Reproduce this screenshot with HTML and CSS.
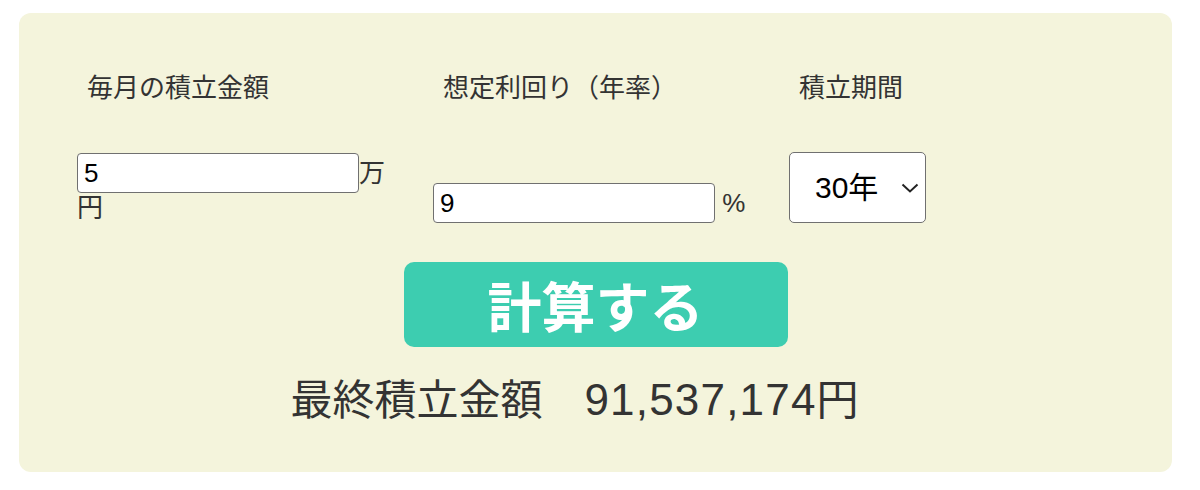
FILE: index.html
```html
<!DOCTYPE html>
<html lang="ja">
    <head>
        <meta charset="UTF-8" />
        <meta name="viewport" content="width=device-width, initial-scale=1.0" />
        <title>積立シミュレーション</title>
        <link rel="stylesheet" href="styles.css">
    </head>
    <body>
        <!-- 積立計算ボックス -->
        <div class="calc">
            <div class="calc-grid">
                <div class="calc-label">毎月の積立金額</div>
                <div class="calc-label">想定利回り（年率）</div>
                <div class="calc-label">積立期間</div>

                <div class="calc-field"><input class="calc-input" type="text" id="monthly" value="5">万円</div>
                <div class="calc-field"><input class="calc-input" type="text" id="rate" value="9"> %</div>
                <div class="calc-field">
                    <div class="sel-wrap">
                        <select class="calc-select" id="year">
                            <option value="30">30年</option>
                        </select>
                        <svg class="sel-arrow" width="18" height="10" viewBox="0 0 18 10">
                            <path d="M1.5 1.5 L9 8.5 L16.5 1.5" fill="none" stroke="#222" stroke-width="2" />
                        </svg>
                    </div>
                </div>
            </div>

            <!-- 計算ボタン -->
            <div class="calc-btn-wrap">
                <button class="calc-btn">計算する</button>
            </div>

            <!-- 結果 -->
            <p class="calc-result">最終積立金額　<span class="calc-num">91,537,174</span>円</p>
        </div>
    </body>
</html>
```

FILE: styles.css
```css
body {
    margin: 0;
    background: #fff;
    font-family: "Noto Sans CJK JP", sans-serif;
    color: #333;
}
/* 積立計算ボックス */
.calc {
    width: 1153px;
    margin: 13px 0 0 19px;
    padding: 54px 0 42px;
    box-sizing: border-box;
    height: 459px;
    background: #f4f4dc;
    border-radius: 12px;
}
.calc-grid {
    display: grid;
    grid-template-columns: repeat(3, 320px);
    column-gap: 36px;
    row-gap: 47px;
    padding-left: 58px;
    align-items: end;
}
.calc-label {
    padding-left: 10px;
    font-size: 26px;
    line-height: 38px;
}
.calc-field {
    font-family: "Liberation Sans", "Noto Sans CJK JP", sans-serif;
    font-size: 26px;
    line-height: 30px;
}
.calc-input {
    width: 282px;
    height: 40px;
    box-sizing: border-box;
    padding: 0 6px;
    border: 1.5px solid #707070;
    border-radius: 4px;
    background: #fff;
    font-family: "Liberation Sans", "Noto Sans CJK JP", sans-serif;
    font-size: 26px;
    color: #000;
}
.sel-wrap {
    position: relative;
    width: 137px;
}
.calc-select {
    display: block;
    width: 137px;
    height: 71px;
    padding: 0 0 0 25px;
    border: 1.5px solid #707070;
    border-radius: 5px;
    background: #fff;
    font-family: "Liberation Sans", "Noto Sans CJK JP", sans-serif;
    font-size: 30px;
    color: #000;
    appearance: none;
    -webkit-appearance: none;
}
.sel-arrow {
    position: absolute;
    left: 112px;
    top: 31px;
    pointer-events: none;
}
/* 計算ボタン */
.calc-btn-wrap {
    text-align: center;
    margin-top: 39px;
}
.calc-btn {
    width: 384px;
    height: 85px;
    border: none;
    border-radius: 10px;
    background: #3dcdb0;
    color: #fff;
    font-family: "Noto Sans CJK JP", sans-serif;
    font-weight: bold;
    font-size: 54px;
    line-height: 1;
    padding: 0;
}
.calc-result {
    margin: 20px 0 0;
    padding-right: 42px;
    text-align: center;
    font-size: 42px;
    line-height: 60px;
}
.calc-num {
    font-family: "Liberation Sans", sans-serif;
    font-size: 44px;
    letter-spacing: 1.2px;
}
```
